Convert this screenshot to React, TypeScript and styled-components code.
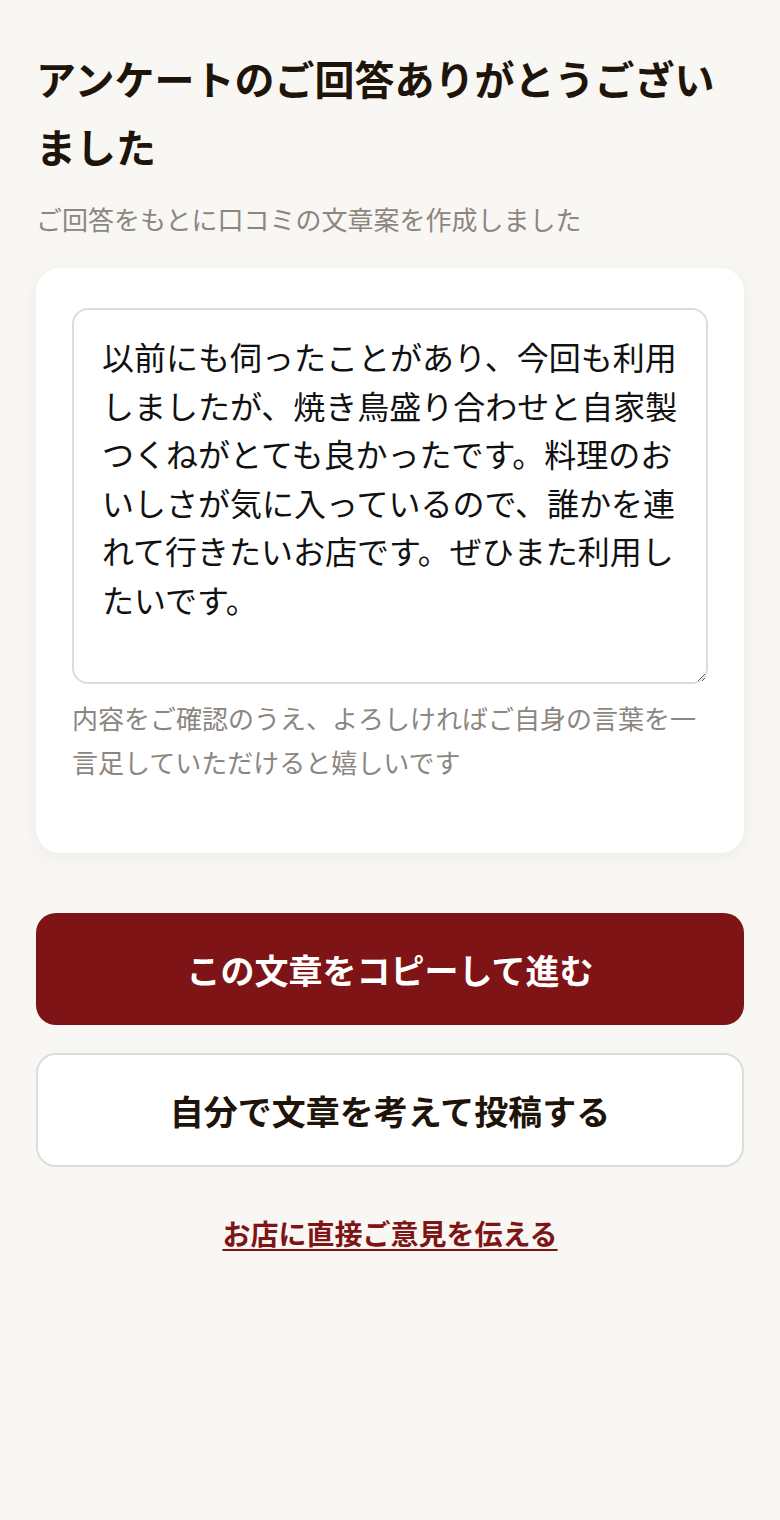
import React from "react";
import styled, { createGlobalStyle } from "styled-components";

const Global = createGlobalStyle`
  html, body { margin: 0; padding: 0; background: #f9f7f3; }
  body { font-family: "Noto Sans CJK JP", "Noto Sans", sans-serif; }
  * { box-sizing: border-box; }
`;

const Page = styled.main`
  padding: 44px 36px 80px;
  display: flex;
  flex-direction: column;
  min-height: 1520px;
`;

const Title = styled.h1`
  margin: 0;
  font-size: 40px;
  line-height: 68px;
  font-weight: 700;
  color: #1e1409;
`;

const Subtitle = styled.p`
  margin: 19px 0 0;
  font-size: 26px;
  line-height: 40px;
  color: #8b8680;
`;

const Card = styled.section`
  margin-top: 29px;
  background: #fff;
  border-radius: 24px;
  padding: 40px 36px 69px;
  box-shadow: 0 4px 20px rgba(0, 0, 0, 0.05);
`;

const TextArea = styled.textarea`
  display: block;
  width: 100%;
  height: 376px;
  border: 2px solid #dcdcdc;
  border-radius: 16px;
  padding: 22px 28px;
  font-family: inherit;
  font-size: 32px;
  line-height: 48.5px;
  color: #111;
  background: #fff;
  resize: vertical;
  outline: none;
`;

const Note = styled.p`
  margin: 12px 0 0;
  font-size: 26px;
  line-height: 44px;
  color: #8b8680;
`;

const Actions = styled.div`
  margin-top: 60px;
  display: flex;
  flex-direction: column;
  gap: 28px;
`;

const Button = styled.button<{ $primary?: boolean }>`
  height: ${(p) => (p.$primary ? "112px" : "114px")};
  width: 100%;
  border-radius: 20px;
  font-family: inherit;
  font-size: 34px;
  font-weight: 700;
  cursor: pointer;
  border: ${(p) => (p.$primary ? "none" : "2px solid #dcdcdc")};
  background: ${(p) => (p.$primary ? "#7f1416" : "#fff")};
  color: ${(p) => (p.$primary ? "#fff" : "#1e1409")};
`;

const LinkRow = styled.div`
  margin-top: 46px;
  text-align: center;
`;

const TextLink = styled.a`
  font-size: 28px;
  font-weight: 700;
  color: #7f1416;
  text-decoration: underline;
  text-underline-offset: 4px;
  cursor: pointer;
`;

const draft =
  "以前にも伺ったことがあり、今回も利用しましたが、焼き鳥盛り合わせと自家製つくねがとても良かったです。料理のおいしさが気に入っているので、誰かを連れて行きたいお店です。ぜひまた利用したいです。";

export default function App() {
  return (
    <>
      <Global />
      <Page>
        <Title>アンケートのご回答ありがとうございました</Title>
        <Subtitle>ご回答をもとに口コミの文章案を作成しました</Subtitle>
        <Card>
          <TextArea defaultValue={draft} />
          <Note>内容をご確認のうえ、よろしければご自身の言葉を一言足していただけると嬉しいです</Note>
        </Card>
        <Actions>
          <Button $primary>この文章をコピーして進む</Button>
          <Button>自分で文章を考えて投稿する</Button>
        </Actions>
        <LinkRow>
          <TextLink>お店に直接ご意見を伝える</TextLink>
        </LinkRow>
      </Page>
    </>
  );
}
